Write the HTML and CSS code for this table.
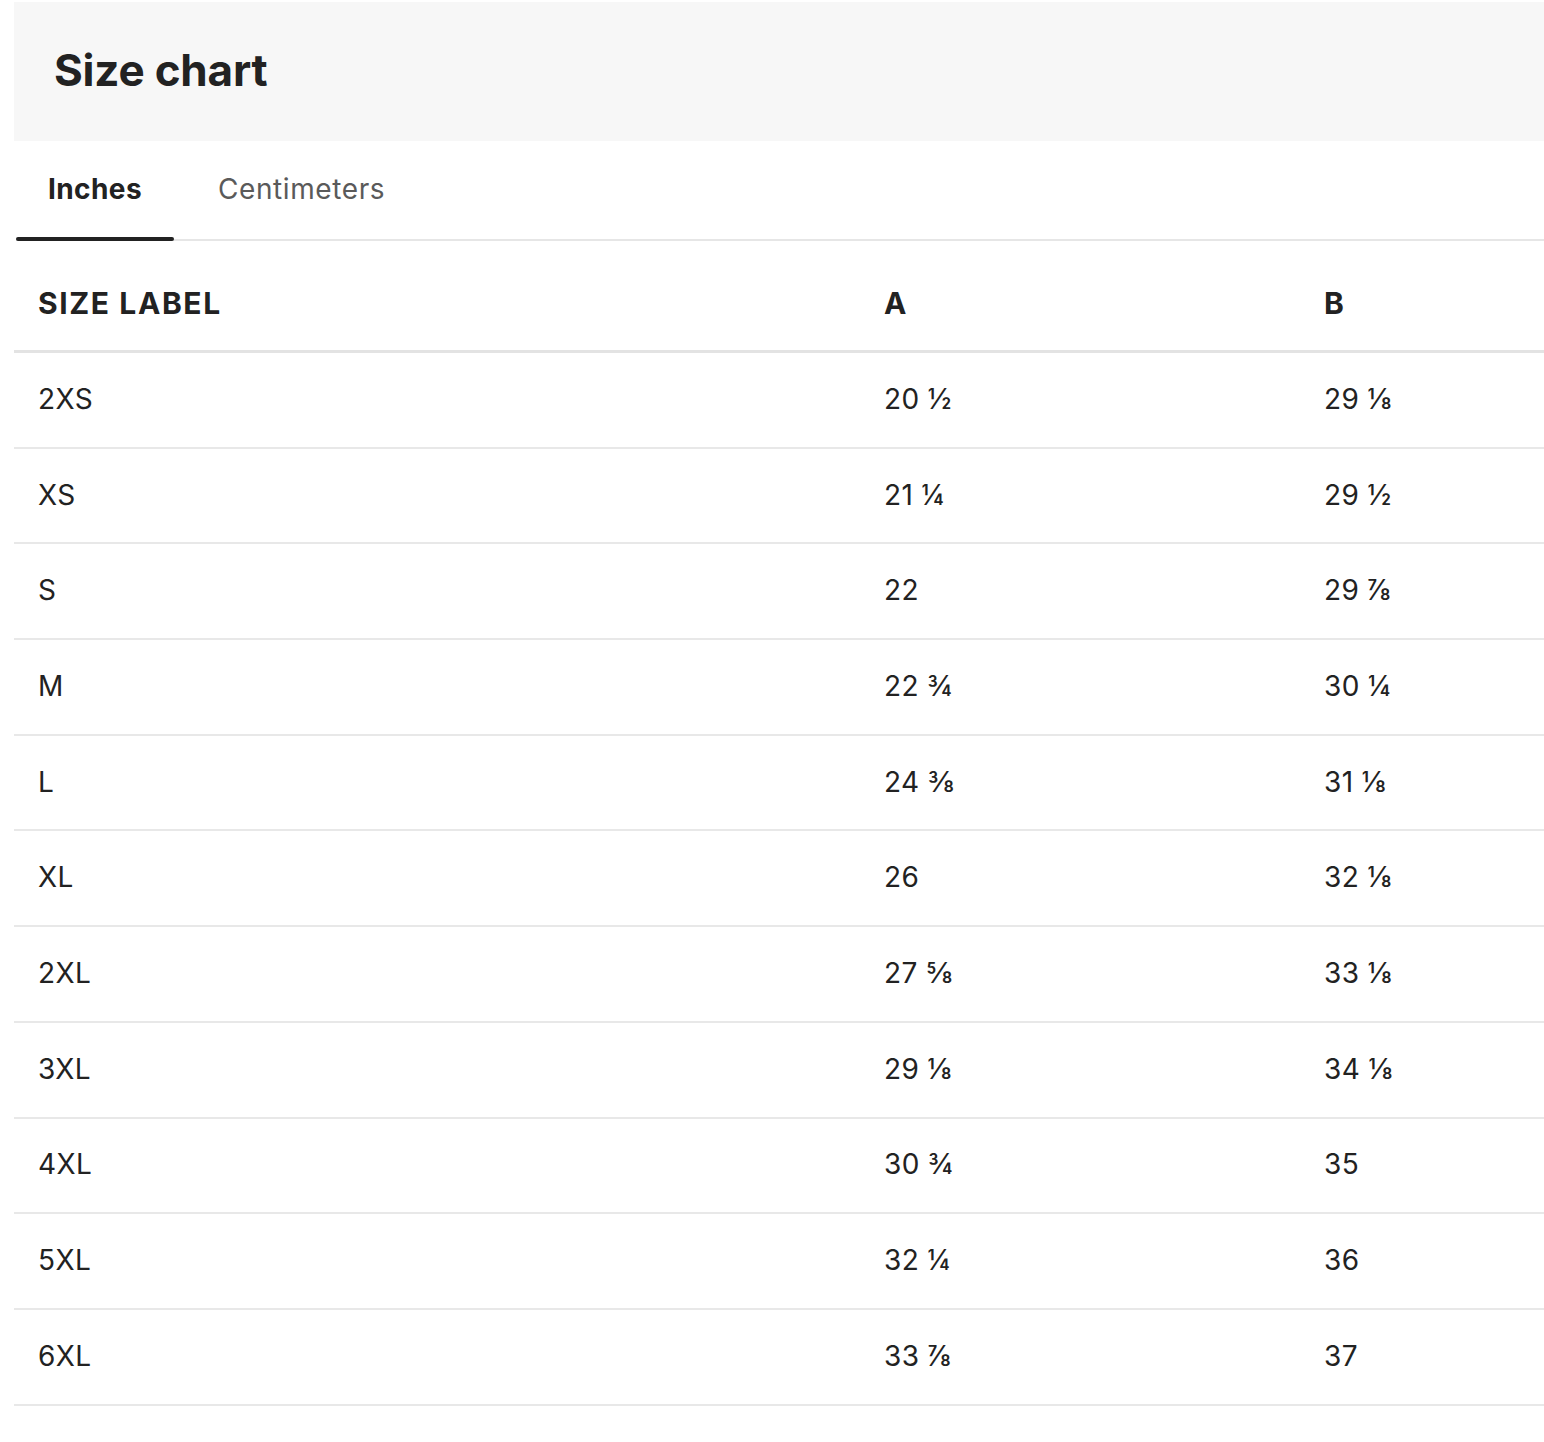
FILE: index.html
```html
<!DOCTYPE html>
<html>
<head>
<meta charset="utf-8">
<link rel="stylesheet" href="styles.css">
</head>
<body>
<div class="panel">
  <div class="header"><h1 class="title">Size chart</h1></div>
  <div class="tabs">
    <div class="tab tab-active">Inches</div>
    <div class="tab">Centimeters</div>
  </div>
  <table class="chart">
    <colgroup><col class="c1"><col class="c2"><col class="c3"></colgroup>
    <thead>
      <tr><th>SIZE LABEL</th><th>A</th><th>B</th></tr>
    </thead>
    <tbody>
      <tr><td>2XS</td><td>20 ½</td><td>29 ⅛</td></tr>
      <tr><td>XS</td><td>21 ¼</td><td>29 ½</td></tr>
      <tr><td>S</td><td>22</td><td>29 ⅞</td></tr>
      <tr><td>M</td><td>22 ¾</td><td>30 ¼</td></tr>
      <tr><td>L</td><td>24 ⅜</td><td>31 ⅛</td></tr>
      <tr><td>XL</td><td>26</td><td>32 ⅛</td></tr>
      <tr><td>2XL</td><td>27 ⅝</td><td>33 ⅛</td></tr>
      <tr><td>3XL</td><td>29 ⅛</td><td>34 ⅛</td></tr>
      <tr><td>4XL</td><td>30 ¾</td><td>35</td></tr>
      <tr><td>5XL</td><td>32 ¼</td><td>36</td></tr>
      <tr><td>6XL</td><td>33 ⅞</td><td>37</td></tr>
    </tbody>
  </table>
</div>
</body>
</html>
```
FILE: styles.css
```css
html, body {
  margin: 0;
  padding: 0;
  background: #fff;
}
body {
  font-family: "Inter", "Lato", "DejaVu Sans", sans-serif;
  color: #222;
}
.panel {
  margin: 2px 0 0 14px;
}
.header {
  background: #f7f7f7;
  height: 139px;
  display: flex;
  align-items: center;
  padding-left: 40px;
  box-sizing: border-box;
  padding-bottom: 3px;
}
.title {
  margin: 0;
  font-size: 44px;
  font-weight: 700;
  color: #222;
  letter-spacing: -0.2px;
}
.tabs {
  display: flex;
  margin-left: 2px;
  height: 98px;
  border-bottom: 2px solid #e6e6e6;
}
.tab {
  display: flex;
  align-items: center;
  padding: 0 32px 2px;
  margin-right: 12px;
  font-size: 28px;
  letter-spacing: 0.6px;
  color: #5a5a5a;
  position: relative;
}
.tab-active {
  color: #222;
  font-weight: 700;
  letter-spacing: 0.4px;
}
.tab-active::after {
  content: "";
  position: absolute;
  left: 0;
  right: 0;
  bottom: -2px;
  height: 4px;
  border-radius: 2px;
  background: #222;
}
.chart {
  width: 1530px;
  border-collapse: collapse;
  table-layout: fixed;
}
.c1 { width: 846px; }
.c2 { width: 440px; }
.c3 { width: 244px; }
.chart th {
  text-align: left;
  font-size: 30px;
  font-weight: 700;
  letter-spacing: 1.6px;
  height: 95px;
  padding: 14px 0 0 24px;
  border-bottom: 3px solid #e3e3e3;
  color: #222;
}
.chart td {
  font-size: 28px;
  letter-spacing: 0.4px;
  height: 91.7px;
  padding: 0 0 2px 24px;
  border-bottom: 2px solid #e8e8e8;
  color: #222;
}
```
